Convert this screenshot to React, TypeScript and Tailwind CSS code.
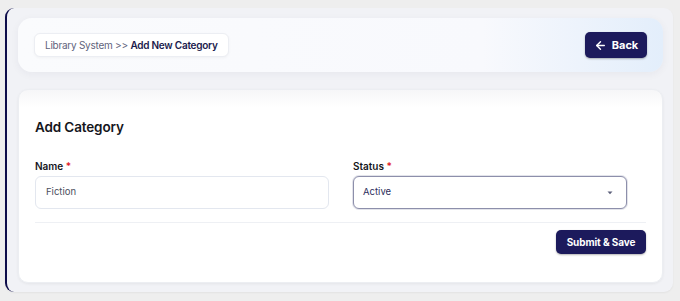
import React from "react";
import { ArrowLeft } from "lucide-react";

export default function App() {
  return (
    <div className="w-[680px] h-[301px] bg-[#eeeeee] pl-[5px] pr-[7px] pt-[8px] pb-[9px] font-['Inter',sans-serif]">
      <div className="h-full bg-[#f1f2f6] rounded-[9px] border-l-[2px] border-[#0e0d4a] pl-[11px] pr-[10px] pt-[10px] pb-[9px] flex flex-col gap-[17px] shadow-[0_1px_2px_rgba(0,0,0,0.05)]">
        {/* header */}
        <div className="h-[54px] shrink-0 rounded-[14px] bg-[linear-gradient(90deg,#fafbfd_0%,#f8f9fd_72%,#e3eefb_100%)] shadow-[0_2px_8px_rgba(30,30,80,0.05)] px-[16px] flex items-center justify-between">
          <div className="h-[24px] px-[10px] flex items-center rounded-[6px] bg-white border border-[#eceef3] text-[10px] tracking-[-0.025em] shadow-[0_1px_3px_rgba(0,0,0,0.04)]">
            <span className="text-[#5f637c]">Library System &gt;&gt;&nbsp;</span>
            <span className="text-[#1b1a4d] font-semibold">Add New Category</span>
          </div>
          <button className="h-[26px] w-[62px] flex items-center justify-center gap-[5px] rounded-[5px] bg-[#1c1a5c] text-white text-[11px] font-bold shadow-[0_1px_2px_rgba(0,0,0,0.3)]">
            <ArrowLeft size={13} strokeWidth={2.6} />
            Back
          </button>
        </div>

        {/* form card */}
        <div className="flex-1 rounded-[10px] bg-[linear-gradient(180deg,#f6f6f8_0px,#ffffff_18px)] shadow-[0_1px_3px_rgba(0,0,0,0.06)] border border-[#eceef2] px-[16px] pt-[27px]">
          <h2 className="text-[13.5px] font-semibold text-[#15161c] leading-[20px] tracking-[-0.01em]">Add Category</h2>
          <div className="flex gap-[24px] mt-[22px]">
            <div className="w-[294px]">
              <label className="block text-[10px] font-semibold text-[#15161c] leading-[14px] mb-[3px]">
                Name <span className="text-[#e11d2a]">*</span>
              </label>
              <div className="h-[33px] rounded-[6px] border border-[#e3e7ef] bg-white flex items-center px-[10px] text-[9.5px] text-[#4b4f5e]">
                Fiction
              </div>
            </div>
            <div className="w-[274px]">
              <label className="block text-[10px] font-semibold text-[#15161c] leading-[14px] mb-[3px]">
                Status <span className="text-[#e11d2a]">*</span>
              </label>
              <div className="h-[33px] rounded-[6px] border-[1.5px] border-[#8d8fab] bg-white flex items-center justify-between px-[9px] text-[9.5px] text-[#2d2f5c] shadow-[0_0_0_1px_rgba(141,143,171,0.25)]">
                <span>Active</span>
                <svg width="6" height="4" viewBox="0 0 6 4" className="mr-[4px]">
                  <path d="M0.5 0.5 L3 3.2 L5.5 0.5 Z" fill="#5c5f7a" />
                </svg>
              </div>
            </div>
          </div>
          <div className="mt-[13px] border-t border-[#eef0f4]" />
          <div className="flex justify-end mt-[7px]">
            <button className="h-[24px] w-[90px] rounded-[5px] bg-[#1c1a5c] text-white text-[10px] font-bold tracking-[-0.01em] shadow-[0_1px_2px_rgba(0,0,0,0.3)]">
              Submit &amp; Save
            </button>
          </div>
        </div>
      </div>
    </div>
  );
}
